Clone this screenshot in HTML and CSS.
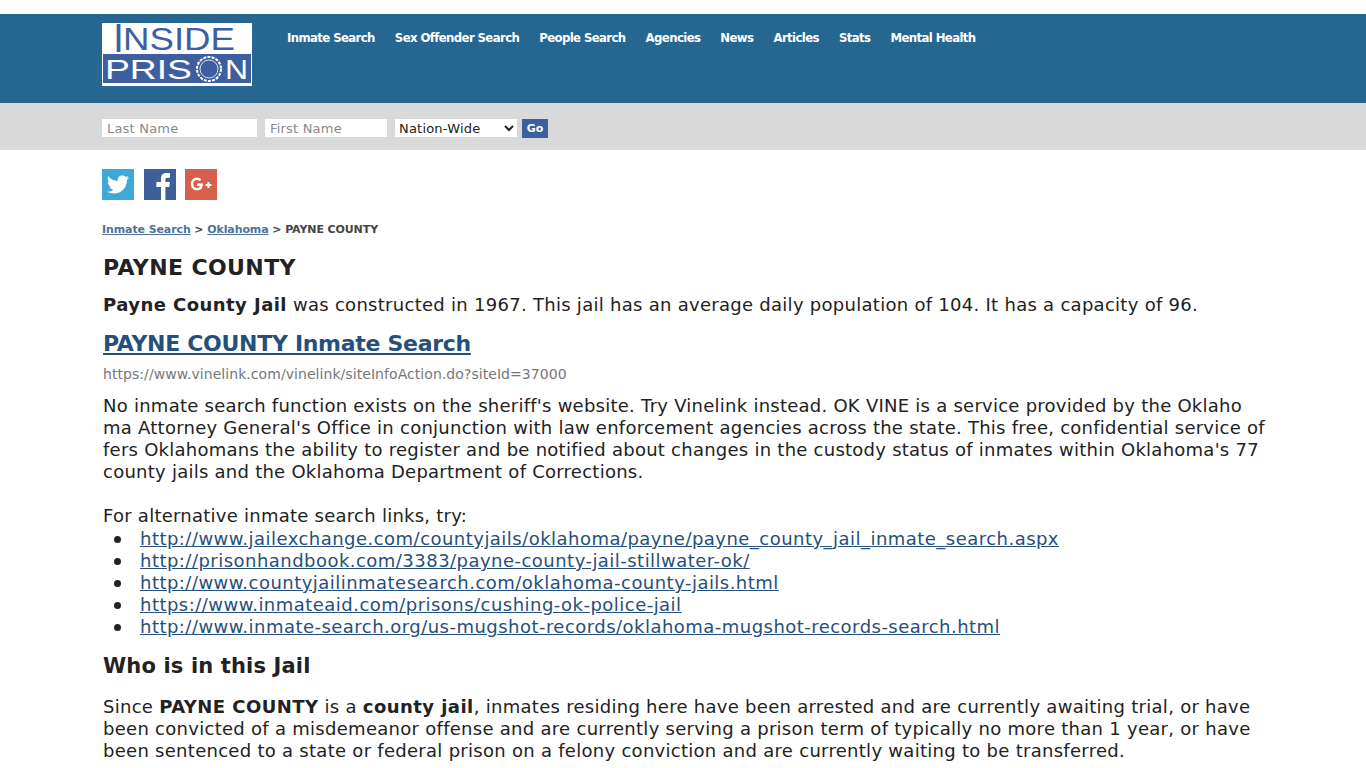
FILE: index.html
```html
<!DOCTYPE html>
<html lang="en">
<head>
    <meta charset="UTF-8">
    <meta name="viewport" content="width=device-width, initial-scale=1.0">
    <title>PAYNE COUNTY - Inside Prison</title>
    <link rel="stylesheet" href="styles.css">
</head>
<body>

<header class="site-header">
    <div class="wrap header-row">
        <a href="#" class="logo">
            <svg width="150" height="63" viewBox="0 0 150 63">
                <rect width="150" height="63" fill="#ffffff"/>
                <rect x="1" y="31" width="148" height="29" fill="#3d5f9f"/>
                <text x="11" y="29" class="logo-cap" textLength="11" lengthAdjust="spacingAndGlyphs">I</text>
                <text x="21" y="27" class="logo-top" textLength="112" lengthAdjust="spacingAndGlyphs">NSIDE</text>
                <text x="3" y="56" class="logo-bottom" textLength="87" lengthAdjust="spacingAndGlyphs">PRIS</text>
                <circle cx="107" cy="46" r="12" fill="none" stroke="#ffffff" stroke-width="2" stroke-dasharray="3 1.2"/>
                <circle cx="107" cy="46" r="9" fill="none" stroke="#ffffff" stroke-width="0.8"/>
                <text x="123" y="56" class="logo-bottom" textLength="23" lengthAdjust="spacingAndGlyphs">N</text>
            </svg>
        </a>
        <nav class="main-nav">
            <a href="#">Inmate Search</a>
            <a href="#">Sex Offender Search</a>
            <a href="#">People Search</a>
            <a href="#">Agencies</a>
            <a href="#">News</a>
            <a href="#">Articles</a>
            <a href="#">Stats</a>
            <a href="#">Mental Health</a>
        </nav>
    </div>
</header>

<div class="search-bar">
    <form class="wrap search-form">
        <input type="text" class="last-name" placeholder="Last Name">
        <input type="text" class="first-name" placeholder="First Name">
        <select class="state-select">
            <option>Nation-Wide</option>
        </select>
        <button type="button" class="go-button">Go</button>
    </form>
</div>

<main class="wrap content">
    <div class="social">
        <a href="#" class="social-icon twitter">
            <svg width="32" height="31" viewBox="0 0 32 31">
                <path fill="#fff" d="M27 8.6c-.8.4-1.700.6-2.600.7.900-.6 1.700-1.400 2-2.500-.9.500-1.800.9-2.900 1.100-.8-.9-2-1.400-3.300-1.400-2.500 0-4.600 2-4.600 4.600 0 .4 0 .7.100 1-3.800-.2-7.200-2-9.400-4.800-.4.700-.6 1.500-.6 2.300 0 1.600.8 3 2 3.800-.7 0-1.400-.2-2-.6v.1c0 2.200 1.600 4.100 3.700 4.500-.7.200-1.400.2-2.100.1.600 1.800 2.300 3.100 4.300 3.200-1.600 1.200-3.500 2-5.700 2-.4 0-.7 0-1.100-.1 2 1.300 4.500 2 7 2 8.500 0 13.100-7 13.100-13.100v-.6c.9-.6 1.700-1.400 2.300-2.300z"/>
            </svg>
        </a>
        <a href="#" class="social-icon facebook">
            <svg width="32" height="31" viewBox="0 0 32 31">
                <path fill="#fff" d="M17 31V18h-4.600v-5H17V9.400C17 5.300 19.500 4 22.600 4c1.400 0 2.800.1 3.400.2v4.500h-2.400c-1.700 0-2.200.9-2.200 2.200V13h4.500l-.7 5h-3.800v13z"/>
            </svg>
        </a>
        <a href="#" class="social-icon gplus">
            <svg width="32" height="31" viewBox="0 0 32 31">
                <path fill="none" stroke="#fff" stroke-width="2.400" d="M15.500 11.200c-1-1-2.200-1.500-3.500-1.500-2.900 0-5 2.300-5 5.300s2.100 5.300 5 5.300c2.700 0 4.500-1.700 4.700-4.600H12"/>
                <path fill="#fff" d="M22.500 13h2v2h2v2h-2v2h-2v-2h-2v-2h2z"/>
            </svg>
        </a>
    </div>

    <div class="breadcrumb">
        <a href="#">Inmate Search</a> &gt; <a href="#">Oklahoma</a> &gt; PAYNE COUNTY
    </div>

    <h1>PAYNE COUNTY</h1>
    <p class="intro"><b>Payne County Jail</b> was constructed in 1967. This jail has an average daily population of 104. It has a capacity of 96.</p>

    <h2 class="search-title"><a href="#">PAYNE COUNTY Inmate Search</a></h2>
    <div class="source-url">https://www.vinelink.com/vinelink/siteInfoAction.do?siteId=37000</div>

    <div class="description">
        No inmate search function exists on the sheriff's website. Try Vinelink instead. OK VINE is a service provided by the Oklaho<br>ma Attorney General's Office in conjunction with law enforcement agencies across the state. This free, confidential service of<br>fers Oklahomans the ability to register and be notified about changes in the custody status of inmates within Oklahoma's 77<br>county jails and the Oklahoma Department of Corrections.
        <br><br>
        For alternative inmate search links, try:
    </div>
    <ul class="link-list">
        <li><a href="#">http://www.jailexchange.com/countyjails/oklahoma/payne/payne_county_jail_inmate_search.aspx</a></li>
        <li><a href="#">http://prisonhandbook.com/3383/payne-county-jail-stillwater-ok/</a></li>
        <li><a href="#">http://www.countyjailinmatesearch.com/oklahoma-county-jails.html</a></li>
        <li><a href="#">https://www.inmateaid.com/prisons/cushing-ok-police-jail</a></li>
        <li><a href="#">http://www.inmate-search.org/us-mugshot-records/oklahoma-mugshot-records-search.html</a></li>
    </ul>

    <h2 class="section-title">Who is in this Jail</h2>
    <p class="section-text">Since <b>PAYNE COUNTY</b> is a <b>county jail</b>, inmates residing here have been arrested and are currently awaiting trial, or have been convicted of a misdemeanor offense and are currently serving a prison term of typically no more than 1 year, or have been sentenced to a state or federal prison on a felony conviction and are currently waiting to be transferred.</p>
</main>

</body>
</html>
```

FILE: styles.css
```css
/* Page */
body {
    margin: 0;
    padding: 0;
    background: #ffffff;
    color: #222222;
    font-family: "DejaVu Sans", Verdana, sans-serif;
    font-size: 18px;
    line-height: 22px;
}
.wrap {
    width: 1162px;
    margin: 0 auto;
}

/* Header */
.site-header {
    margin-top: 14px;
    height: 89px;
    background: #266792;
}
.header-row {
    display: flex;
    padding-top: 9px;
}
.logo {
    display: block;
    height: 63px;
}
.logo svg {
    display: block;
}
.logo-cap {
    font-family: "Liberation Sans", Arial, sans-serif;
    font-size: 40px;
    fill: #3d5f9f;
}
.logo-top {
    font-family: "Liberation Sans", Arial, sans-serif;
    font-size: 31px;
    fill: #3d5f9f;
}
.logo-bottom {
    font-family: "Liberation Sans", Arial, sans-serif;
    font-size: 27px;
    fill: #ffffff;
}
.main-nav {
    display: flex;
    gap: 20px;
    margin-left: 35px;
    padding-top: 5px;
}
.main-nav a {
    color: #ffffff;
    font-family: "DejaVu Sans Condensed", Tahoma, sans-serif;
    font-size: 13px;
    font-weight: bold;
    letter-spacing: -0.6px;
    line-height: 20px;
    text-decoration: none;
}

/* Search bar */
.search-bar {
    height: 47px;
    background: #d9d9d9;
}
.search-form {
    display: flex;
    align-items: flex-start;
    padding-top: 16px;
}
.search-form input,
.state-select {
    box-sizing: border-box;
    height: 18px;
    border: none;
    padding: 0 5px;
    background: #ffffff;
    font-family: "DejaVu Sans", Verdana, sans-serif;
    font-size: 13px;
    letter-spacing: 0.2px;
}
.search-form input::placeholder {
    color: #8a8a8a;
}
.last-name {
    width: 155px;
    margin-right: 8px;
}
.first-name {
    width: 122px;
    margin-right: 8px;
}
.state-select {
    width: 122px;
    margin-right: 5px;
    padding: 0;
    color: #222222;
}
.go-button {
    width: 26px;
    height: 19px;
    padding: 0;
    border: none;
    background: #3d5f9f;
    color: #ffffff;
    font-family: "DejaVu Sans", Verdana, sans-serif;
    font-size: 11px;
    font-weight: bold;
}

/* Content */
.social {
    display: flex;
    padding-top: 19px;
}
.social-icon {
    display: block;
    width: 32px;
    height: 31px;
    margin-right: 10px;
}
.social-icon.facebook {
    margin-right: 9px;
}
.social-icon svg {
    display: block;
}
.twitter {
    background: #3fa9d5;
}
.facebook {
    background: #3f5f9a;
}
.gplus {
    background: #d6604c;
}
.breadcrumb {
    margin-top: 22px;
    color: #444444;
    font-size: 11px;
    font-weight: bold;
    letter-spacing: -0.1px;
    line-height: 16px;
}
.breadcrumb a {
    color: #4f7299;
}
h1 {
    margin: 15px 0 0;
    padding-left: 1px;
    font-size: 22px;
    letter-spacing: 0.4px;
    line-height: 30px;
}
.intro {
    margin: 11px 0 0;
    padding-left: 1px;
    letter-spacing: 0.28px;
}
.intro b,
.section-text b {
    letter-spacing: 0.45px;
}
.search-title {
    margin: 13px 0 0;
    padding-left: 1px;
    font-size: 22px;
    letter-spacing: -0.3px;
    line-height: 30px;
}
.search-title a,
.link-list a {
    color: #264f7c;
}
.source-url {
    margin-top: 5px;
    padding-left: 1px;
    color: #777777;
    font-size: 14px;
    letter-spacing: 0.06px;
    line-height: 20px;
}
.description {
    margin-top: 11px;
    padding-left: 1px;
    letter-spacing: 0.25px;
    white-space: nowrap;
}
.link-list {
    margin: 1px 0 0;
    padding: 0 0 0 38px;
    letter-spacing: 0.47px;
}
.link-list li {
    position: relative;
    list-style: none;
}
.link-list li::before {
    content: "";
    position: absolute;
    left: -26px;
    top: 8px;
    width: 7px;
    height: 7px;
    border-radius: 50%;
    background: #222222;
}
.section-title {
    margin: 14px 0 0;
    padding-left: 1px;
    font-size: 21px;
    letter-spacing: 0.15px;
    line-height: 28px;
}
.section-text {
    margin: 16px 0 0;
    padding-left: 1px;
    letter-spacing: 0.28px;
}
```
